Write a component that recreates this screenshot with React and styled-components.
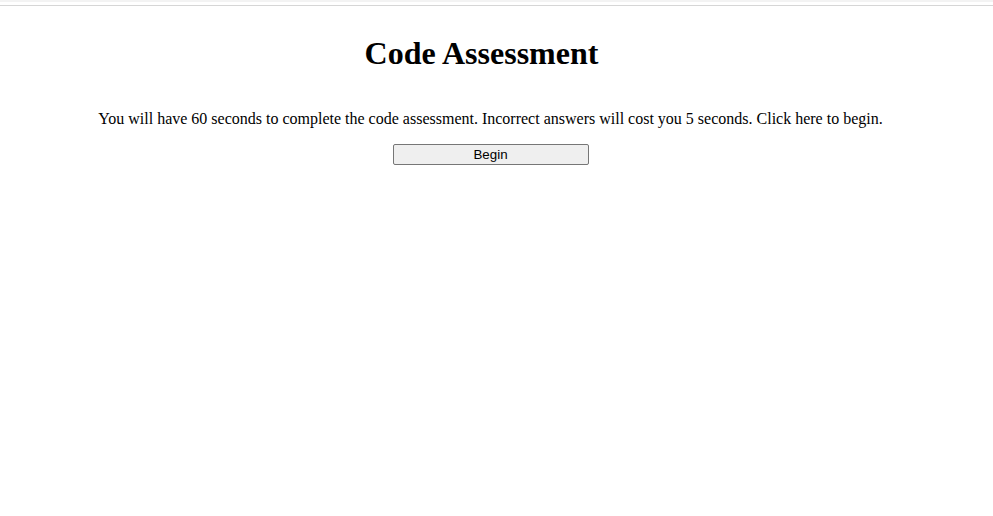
import styled, { createGlobalStyle } from "styled-components";

const GlobalStyle = createGlobalStyle`
  body {
    margin: 0;
    background: #fff;
    font-family: "Liberation Serif", "Times New Roman", serif;
    color: #000;
  }
`;

const TopBar = styled.div`
  height: 2px;
  background: #f3f3f3;
  margin-bottom: 3px;
`;

const Rule = styled.div`
  height: 1px;
  background: #d6d6d6;
`;

const Main = styled.main`
  display: flex;
  flex-direction: column;
  align-items: center;
  padding: 0 12px 0 0;
`;

const Title = styled.h1`
  font-size: 32px;
  font-weight: bold;
  margin: 29px 0 38px;
  padding-right: 18px;
`;

const Intro = styled.p`
  font-size: 16px;
  margin: 0 0 16px;
  text-align: center;
`;

const StartButton = styled.button`
  width: 196px;
  height: 21px;
  padding: 0;
  font-family: "Liberation Sans", Arial, sans-serif;
  font-size: 13.33px;
  color: #000;
  background: #efefef;
  border: 1px solid #767676;
  border-radius: 2px;
  cursor: pointer;

  &:hover {
    background: #e5e5e5;
  }
`;

export default function App() {
  return (
    <>
      <GlobalStyle />
      <TopBar />
      <Rule />
      <Main>
        <Title>Code Assessment</Title>
        <Intro>
          You will have 60 seconds to complete the code assessment. Incorrect
          answers will cost you 5 seconds. Click here to begin.
        </Intro>
        <StartButton>Begin</StartButton>
      </Main>
    </>
  );
}
